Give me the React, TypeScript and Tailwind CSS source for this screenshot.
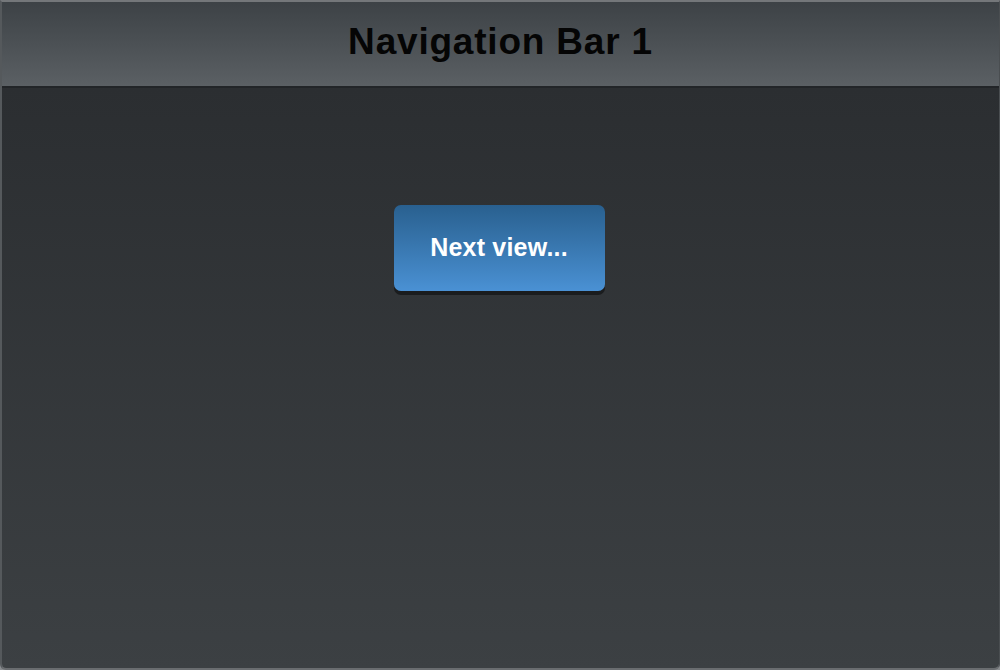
import React from "react";

export default function App() {
  return (
    <div className="w-[1000px] h-[670px] bg-[#8a8d90] overflow-hidden" style={{ fontFamily: '"Liberation Sans", Arial, sans-serif' }}>
      <div className="w-full h-full flex flex-col rounded-b-[6px] overflow-hidden border-t-[2px] border-t-[#74777a] border-l-[2px] border-l-[#55595c] border-r-[1px] border-r-[#4a4e51] border-b-[2px] border-b-[#6a6d70]">
        <div className="h-[86px] shrink-0 flex items-center justify-center bg-gradient-to-b from-[#3d4246] to-[#5b6064] border-b-[2px] border-b-[#222528]">
          <span className="text-[37px] font-bold text-[#050505] tracking-[0.8px] leading-none mb-[6px]">Navigation Bar 1</span>
        </div>
        <div className="flex-1 flex justify-center bg-gradient-to-b from-[#2b2e31] to-[#3c4043] pt-[117px]">
          <div className="ml-[-3px] w-[211px] h-[86px] rounded-[7px] bg-gradient-to-b from-[#29608f] to-[#4a91d4] shadow-[0_4px_0_#1a1c1e] flex items-center justify-center">
            <span className="text-[25px] font-bold text-white tracking-[0.2px] leading-none mb-[1px]">Next view...</span>
          </div>
        </div>
      </div>
    </div>
  );
}
